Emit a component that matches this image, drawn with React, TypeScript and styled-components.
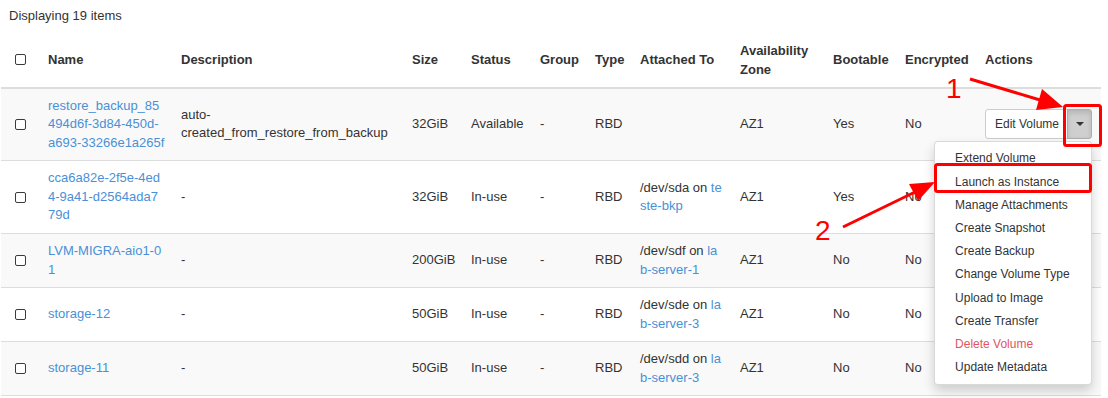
import React from 'react';
import styled, { createGlobalStyle } from 'styled-components';

const GlobalStyle = createGlobalStyle`
  html, body {
    margin: 0;
    padding: 0;
    background: #fff;
  }
  body {
    font-family: "Liberation Sans", Arial, Helvetica, sans-serif;
    font-size: 13px;
    line-height: 1.42857;
    color: #333;
  }
`;

const Page = styled.div`
  position: relative;
  width: 1108px;
  height: 398px;
  overflow: hidden;
`;

const Caption = styled.div`
  padding: 7px 9px;
`;

const Table = styled.table`
  width: 1100px;
  margin-left: 1px;
  table-layout: fixed;
  border-collapse: collapse;
  border-spacing: 0;
  > tbody > tr:nth-of-type(odd) {
    background: #f9f9f9;
  }
`;

const Col = styled.col<{ $width: number }>`
  width: ${(p) => p.$width}px;
`;

const Th = styled.th`
  padding: 8px;
  line-height: 19px;
  text-align: left;
  vertical-align: middle;
  font-weight: bold;
  border-bottom: 2px solid #ddd;
`;

const Td = styled.td<{ $breakAll?: boolean }>`
  padding: 8px;
  vertical-align: middle;
  border-bottom: 1px solid #ddd;
  ${(p) => p.$breakAll && 'word-break: break-all;'}
`;

const CheckCell = styled(Td)`
  text-align: center;
`;

const CheckHead = styled(Th)`
  text-align: center;
`;

const Checkbox = styled.input.attrs({ type: 'checkbox' })`
  appearance: none;
  display: block;
  margin: 0 auto;
  width: 11px;
  height: 11px;
  box-sizing: border-box;
  border: 1.5px solid #3b3b3b;
  border-radius: 2px;
  background: #fff;
`;

const Link = styled.a`
  color: #4a90d6;
  text-decoration: none;
`;

const ButtonGroup = styled.div`
  position: relative;
  display: inline-flex;
  vertical-align: middle;
`;

const Button = styled.button`
  font-family: inherit;
  font-size: 12px;
  line-height: 1.5;
  color: #333;
  background: #fff;
  border: 1px solid #ccc;
  border-radius: 3px 0 0 3px;
  padding: 5px 8px 5px 9px;
  margin: 0;
  white-space: nowrap;
`;

const ToggleButton = styled(Button)`
  display: flex;
  align-items: center;
  margin-left: -1px;
  padding: 5px 7px 5px 8px;
  border-radius: 0 3px 3px 0;
  border-color: #adadad;
  background: #cfcfcf;
  box-shadow: inset 0 3px 5px rgba(0, 0, 0, 0.125);
`;

const Caret = styled.span`
  display: inline-block;
  width: 0;
  height: 0;
  border-top: 4px solid #333;
  border-left: 4px solid transparent;
  border-right: 4px solid transparent;
`;

const Menu = styled.ul`
  position: absolute;
  top: calc(100% + 2px);
  right: 0;
  z-index: 2;
  width: 158px;
  box-sizing: border-box;
  margin: 0;
  padding: 5px 0;
  list-style: none;
  background: #fff;
  border: 1px solid rgba(0, 0, 0, 0.15);
  border-radius: 4px;
  box-shadow: 0 6px 12px rgba(0, 0, 0, 0.175);
`;

const MenuItem = styled.li<{ $danger?: boolean }>`
  padding: 3px 20px;
  font-size: 12px;
  line-height: 17.2px;
  white-space: nowrap;
  color: ${(p) => (p.$danger ? '#e2545f' : '#333')};
`;

const Overlay = styled.svg`
  position: absolute;
  left: 0;
  top: 0;
  z-index: 3;
  pointer-events: none;
`;

type Volume = {
  name: string;
  description: string;
  size: string;
  status: string;
  device?: string;
  server?: string;
  bootable: string;
};

const VOLUMES: Volume[] = [
  {
    name: 'restore_backup_85494d6f-3d84-450d-a693-33266e1a265f',
    description: 'auto-created_from_restore_from_backup',
    size: '32GiB',
    status: 'Available',
    bootable: 'Yes',
  },
  {
    name: 'cca6a82e-2f5e-4ed4-9a41-d2564ada779d',
    description: '-',
    size: '32GiB',
    status: 'In-use',
    device: '/dev/sda',
    server: 'teste-bkp',
    bootable: 'Yes',
  },
  {
    name: 'LVM-MIGRA-aio1-01',
    description: '-',
    size: '200GiB',
    status: 'In-use',
    device: '/dev/sdf',
    server: 'lab-server-1',
    bootable: 'No',
  },
  {
    name: 'storage-12',
    description: '-',
    size: '50GiB',
    status: 'In-use',
    device: '/dev/sde',
    server: 'lab-server-3',
    bootable: 'No',
  },
  {
    name: 'storage-11',
    description: '-',
    size: '50GiB',
    status: 'In-use',
    device: '/dev/sdd',
    server: 'lab-server-3',
    bootable: 'No',
  },
];

const ACTIONS = [
  'Extend Volume',
  'Launch as Instance',
  'Manage Attachments',
  'Create Snapshot',
  'Create Backup',
  'Change Volume Type',
  'Upload to Image',
  'Create Transfer',
  'Delete Volume',
  'Update Metadata',
];

const WIDTHS = [39, 133, 231, 59, 69, 55, 45, 100, 93, 72, 80, 124];

const RED = '#ff0000';

const Annotations = () => (
  <Overlay width={1108} height={398} viewBox="0 0 1108 398">
    <rect x={1064.5} y={105.5} width={36} height={40} rx={2} fill="none" stroke={RED} strokeWidth={3} />
    <rect x={935.5} y={164.5} width={155} height={27} rx={2} fill="none" stroke={RED} strokeWidth={3} />
    <line x1={970} y1={79} x2={1040} y2={100} stroke={RED} strokeWidth={3} />
    <polygon points="1063,107 1036,110 1042,89" fill={RED} />
    <line x1={843} y1={227} x2={915} y2={192} stroke={RED} strokeWidth={3} />
    <polygon points="935,182 918,201 909,184" fill={RED} />
    <text x={946} y={98} fill={RED} fontSize={28} fontFamily="Liberation Sans, Arial, sans-serif">
      1
    </text>
    <text x={815} y={240} fill={RED} fontSize={28} fontFamily="Liberation Sans, Arial, sans-serif">
      2
    </text>
  </Overlay>
);

const App = () => (
  <Page>
    <GlobalStyle />
    <Caption>Displaying 19 items</Caption>
    <Table>
      <colgroup>
        {WIDTHS.map((w, i) => (
          <Col key={i} $width={w} />
        ))}
      </colgroup>
      <thead>
        <tr>
          <CheckHead>
            <Checkbox />
          </CheckHead>
          <Th>Name</Th>
          <Th>Description</Th>
          <Th>Size</Th>
          <Th>Status</Th>
          <Th>Group</Th>
          <Th>Type</Th>
          <Th>Attached To</Th>
          <Th>Availability Zone</Th>
          <Th>Bootable</Th>
          <Th>Encrypted</Th>
          <Th>Actions</Th>
        </tr>
      </thead>
      <tbody>
        {VOLUMES.map((v, i) => (
          <tr key={v.name}>
            <CheckCell>
              <Checkbox />
            </CheckCell>
            <Td $breakAll>
              <Link>{v.name}</Link>
            </Td>
            <Td>{v.description}</Td>
            <Td>{v.size}</Td>
            <Td>{v.status}</Td>
            <Td>-</Td>
            <Td>RBD</Td>
            <Td $breakAll>
              {v.device && (
                <>
                  {v.device} on <Link>{v.server}</Link>
                </>
              )}
            </Td>
            <Td>AZ1</Td>
            <Td>{v.bootable}</Td>
            <Td>No</Td>
            <Td>
              {i === 0 && (
                <ButtonGroup>
                  <Button>Edit Volume</Button>
                  <ToggleButton>
                    <Caret />
                  </ToggleButton>
                  <Menu>
                    {ACTIONS.map((a) => (
                      <MenuItem key={a} $danger={a === 'Delete Volume'}>
                        {a}
                      </MenuItem>
                    ))}
                  </Menu>
                </ButtonGroup>
              )}
            </Td>
          </tr>
        ))}
      </tbody>
    </Table>
    <Annotations />
  </Page>
);

export default App;
